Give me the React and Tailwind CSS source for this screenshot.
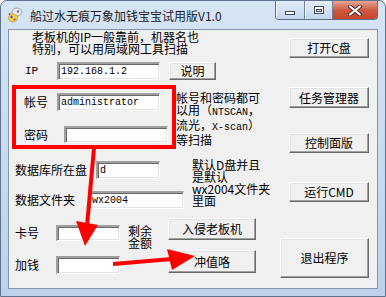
import React from "react";

function Btn({ className = "", children }) {
  return (
    <div
      className={`flex items-center justify-center bg-[#f0f0f0] border border-t-white border-l-white border-r-[#696969] border-b-[#696969] shadow-[inset_-1px_-1px_0_#a0a0a0,inset_1px_1px_0_#e3e3e3] text-[12px] leading-none text-black whitespace-nowrap ${className}`}
    >
      {children}
    </div>
  );
}

function Field({ className = "", children }) {
  return (
    <div
      className={`flex items-center bg-white border-t-2 border-l-2 border-t-[#a0a0a0] border-l-[#a0a0a0] border-b border-r border-b-white border-r-white shadow-[inset_1px_1px_0_#696969,inset_-1px_-1px_0_#e3e3e3] pl-[2px] font-['Liberation_Mono',monospace] text-[10px] leading-none text-black whitespace-nowrap ${className}`}
    >
      {children}
    </div>
  );
}

function AppIcon() {
  return (
    <svg width="16" height="16" viewBox="0 0 16 16">
      <ellipse cx="10" cy="5" rx="5" ry="4" fill="#e8e8ee" stroke="#8a8fa0" strokeWidth="0.8" />
      <circle cx="11" cy="4.5" r="1.2" fill="#6a6f80" />
      <ellipse cx="6" cy="11" rx="4.5" ry="4" fill="#f3d23a" stroke="#b0902a" strokeWidth="0.6" />
      <circle cx="4.5" cy="10" r="1.2" fill="#3b5bd6" />
      <circle cx="7.5" cy="12.5" r="1.1" fill="#b03fb0" />
      <circle cx="2.5" cy="7" r="1" fill="#e0443a" />
    </svg>
  );
}

export default function App() {
  return (
    <div className="relative w-[386px] h-[297px] overflow-hidden rounded-t-[7px] border border-[#5f738e] bg-gradient-to-b from-[#d6e5f5] via-[#c9dbef] to-[#bdd2ea] flex flex-col font-['Noto_Sans_CJK_SC',sans-serif] text-black">
      {/* Title bar */}
      <div className="h-[28px] flex items-start shrink-0">
        <div className="ml-[6px] mt-[6px]">
          <AppIcon />
        </div>
        <div className="ml-[7px] mt-[7px] text-[12px] leading-[15px] text-[#1b1b1b] whitespace-nowrap">
          船过水无痕万象加钱宝宝试用版V1.0
        </div>
        <div className="ml-auto mr-[7px] flex h-[19px] rounded-b-[4px] border border-t-0 border-[#5b6f8c] overflow-hidden">
          <div className="w-[29px] h-full flex items-center justify-center bg-gradient-to-b from-[#e4edf8] to-[#c4d5ea] border-r border-[#6f82a0] shadow-[inset_1px_0_0_#f4f8fd]">
            <div className="w-[10px] h-[4px] mt-[5px] bg-white border border-[#3c4a5e]" />
          </div>
          <div className="w-[28px] h-full flex items-center justify-center bg-gradient-to-b from-[#e4edf8] to-[#c4d5ea] border-r border-[#6f82a0] shadow-[inset_1px_0_0_#f4f8fd]">
            <div className="w-[10px] h-[8px] border border-[#3c4a5e] bg-white flex items-center justify-center">
              <div className="w-[6px] h-[3px] border border-[#3c4a5e] bg-[#d8e2ee]" />
            </div>
          </div>
          <div className="w-[44px] h-full flex items-center justify-center bg-gradient-to-b from-[#e9a695] via-[#cf5a41] to-[#c4452c]">
            <svg width="14" height="11" viewBox="0 0 14 11">
              <path d="M2 1.5 L12 9.5 M12 1.5 L2 9.5" stroke="#4a2a24" strokeWidth="4" strokeLinecap="round" />
              <path d="M2 1.5 L12 9.5 M12 1.5 L2 9.5" stroke="#ffffff" strokeWidth="2.2" strokeLinecap="round" />
            </svg>
          </div>
        </div>
      </div>

      {/* Body */}
      <div className="flex-1 px-[7px] pb-[7px]">
        <div className="w-full h-full bg-[#f0f0f0] border border-[#8596ac] flex flex-row">
          {/* Left column */}
          <div className="w-[271px] flex flex-col">
            {/* description */}
            <div className="mt-[1px] pl-[23px] text-[12px] leading-[12px] whitespace-nowrap">
              老板机的IP一般靠前，机器名也
              <br />
              特别，可以用局域网工具扫描
            </div>

            {/* IP row */}
            <div className="mt-[7px] h-[18px] flex items-center">
              <div className="w-[48px] pl-[16px] font-['Liberation_Mono',monospace] text-[11px] leading-none">IP</div>
              <Field className="w-[103px] h-[18px]">192.168.1.2</Field>
              <Btn className="ml-[9px] w-[47px] h-[18px]">说明</Btn>
            </div>

            {/* account block */}
            <div className="mt-[12px] flex flex-row">
              <div className="w-[167px] flex flex-col">
                <div className="mt-[1px] h-[18px] flex items-center">
                  <div className="w-[48px] pl-[15px] text-[12px] leading-none">帐号</div>
                  <Field className="w-[103px] h-[18px]">administrator</Field>
                </div>
                <div className="mt-[15px] h-[17px] flex items-center">
                  <div className="w-[55px] pl-[15px] text-[12px] leading-none">密码</div>
                  <Field className="w-[104px] h-[17px]"></Field>
                </div>
              </div>
              <div className="text-[12px] leading-[12px] whitespace-nowrap">
                帐号和密码都可
                <br />
                以用（<span className="font-['Liberation_Mono',monospace] text-[10px]">NTSCAN</span>，
                <br />
                流光，<span className="font-['Liberation_Mono',monospace] text-[10px]">X-scan</span>）
                <br />
                等扫描
              </div>
            </div>

            {/* db block */}
            <div className="mt-[12px] flex flex-row">
              <div className="w-[183px] flex flex-col">
                <div className="mt-[3px] h-[18px] flex items-center">
                  <div className="w-[87px] pl-[6px] text-[12px] leading-none whitespace-nowrap">数据库所在盘</div>
                  <Field className="w-[64px] h-[18px]">d</Field>
                </div>
                <div className="mt-[12px] h-[18px] flex items-center">
                  <div className="w-[79px] pl-[6px] text-[12px] leading-none whitespace-nowrap">数据文件夹</div>
                  <Field className="w-[96px] h-[18px]">wx2004</Field>
                </div>
              </div>
              <div className="mt-[1px] text-[12px] leading-[12px] whitespace-nowrap">
                默认D盘并且
                <br />
                是默认
                <br />
                wx2004文件夹
                <br />
                里面
              </div>
            </div>

            {/* card block */}
            <div className="mt-[9px] flex flex-row">
              <div className="w-[111px] flex flex-col">
                <div className="mt-[7px] h-[16px] flex items-center">
                  <div className="w-[47px] pl-[6px] text-[12px] leading-none">卡号</div>
                  <Field className="w-[64px] h-[16px]"></Field>
                </div>
                <div className="mt-[15px] h-[18px] flex items-center">
                  <div className="w-[47px] pl-[6px] text-[12px] leading-none">加钱</div>
                  <Field className="w-[64px] h-[18px]"></Field>
                </div>
              </div>
              <div className="ml-[8px] mt-[7px] w-[24px] text-[12px] leading-[12px]">
                剩余
                <br />
                金额
              </div>
              <div className="ml-[16px] flex flex-col">
                <Btn className="w-[88px] h-[22px]">入侵老板机</Btn>
                <Btn className="mt-[10px] w-[88px] h-[23px]">冲值咯</Btn>
              </div>
            </div>
          </div>

          {/* Right column */}
          <div className="w-[89px] flex flex-col items-end">
            <Btn className="mt-[8px] w-[80px] h-[20px]">打开C盘</Btn>
            <Btn className="mt-[29px] w-[80px] h-[21px]">任务管理器</Btn>
            <Btn className="mt-[25px] w-[80px] h-[20px]">控制面版</Btn>
            <Btn className="mt-[29px] w-[80px] h-[20px]">运行CMD</Btn>
            <Btn className="mt-[36px] w-[89px] h-[40px]">退出程序</Btn>
          </div>
        </div>
      </div>

      {/* Red annotations overlay */}
      <svg
        className="absolute left-[-1px] top-[-1px] pointer-events-none"
        width="386"
        height="297"
        viewBox="0 0 386 297"
      >
        <rect x="14" y="87" width="160" height="60" fill="none" stroke="#ff0000" strokeWidth="4" />
        <line x1="94" y1="148" x2="87" y2="226" stroke="#ff0000" strokeWidth="4" />
        <polygon points="76,221 98,225 85,246" fill="#ff0000" />
        <line x1="113" y1="264" x2="172" y2="259" stroke="#ff0000" strokeWidth="4" />
        <polygon points="167,249 195,256 172,270" fill="#ff0000" />
      </svg>
    </div>
  );
}
